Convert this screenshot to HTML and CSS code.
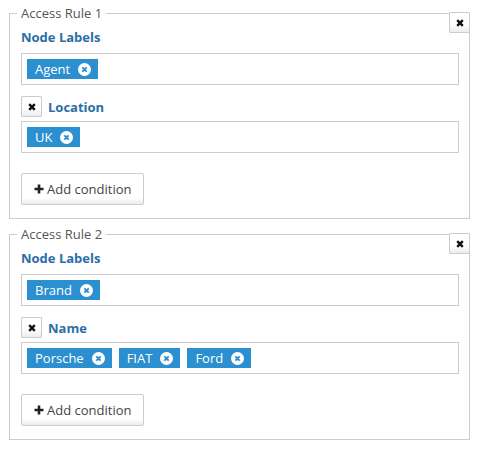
FILE: index.html
```html
<!DOCTYPE html>
<html>
<head>
<meta charset="utf-8">
<link rel="stylesheet" href="styles.css">
</head>
<body>
<div class="rules">
  <fieldset class="rule">
    <legend class="rule-title">Access Rule 1</legend>
    <button class="icon-btn rule-remove" type="button"><svg width="8" height="8" viewBox="0 0 8 8"><path d="M1.2 1.2L6.8 6.8M6.8 1.2L1.2 6.8" stroke="#111" stroke-width="2.4"/></svg></button>
    <div class="field-label">Node Labels</div>
    <div class="tag-box">
      <span class="tag">Agent<span class="tag-x"><svg width="13" height="13" viewBox="0 0 13 13"><circle cx="6.5" cy="6.5" r="6.5" fill="#fff"/><path d="M4.3 4.3L8.7 8.7M8.7 4.3L4.3 8.7" stroke="#2b8fd0" stroke-width="1.9"/></svg></span></span>
    </div>
    <div class="cond-head">
      <button class="icon-btn cond-remove" type="button"><svg width="8" height="8" viewBox="0 0 8 8"><path d="M1.2 1.2L6.8 6.8M6.8 1.2L1.2 6.8" stroke="#111" stroke-width="2.4"/></svg></button>
      <span class="field-label inline">Location</span>
    </div>
    <div class="tag-box">
      <span class="tag">UK<span class="tag-x"><svg width="13" height="13" viewBox="0 0 13 13"><circle cx="6.5" cy="6.5" r="6.5" fill="#fff"/><path d="M4.3 4.3L8.7 8.7M8.7 4.3L4.3 8.7" stroke="#2b8fd0" stroke-width="1.9"/></svg></span></span>
    </div>
    <button class="add-btn" type="button"><svg width="10" height="10" viewBox="0 0 10 10"><path d="M5 0.5V9.5M0.5 5H9.5" stroke="#222" stroke-width="2.6"/></svg>Add condition</button>
  </fieldset>

  <fieldset class="rule">
    <legend class="rule-title">Access Rule 2</legend>
    <button class="icon-btn rule-remove" type="button"><svg width="8" height="8" viewBox="0 0 8 8"><path d="M1.2 1.2L6.8 6.8M6.8 1.2L1.2 6.8" stroke="#111" stroke-width="2.4"/></svg></button>
    <div class="field-label">Node Labels</div>
    <div class="tag-box">
      <span class="tag">Brand<span class="tag-x"><svg width="13" height="13" viewBox="0 0 13 13"><circle cx="6.5" cy="6.5" r="6.5" fill="#fff"/><path d="M4.3 4.3L8.7 8.7M8.7 4.3L4.3 8.7" stroke="#2b8fd0" stroke-width="1.9"/></svg></span></span>
    </div>
    <div class="cond-head">
      <button class="icon-btn cond-remove" type="button"><svg width="8" height="8" viewBox="0 0 8 8"><path d="M1.2 1.2L6.8 6.8M6.8 1.2L1.2 6.8" stroke="#111" stroke-width="2.4"/></svg></button>
      <span class="field-label inline">Name</span>
    </div>
    <div class="tag-box">
      <span class="tag">Porsche<span class="tag-x"><svg width="13" height="13" viewBox="0 0 13 13"><circle cx="6.5" cy="6.5" r="6.5" fill="#fff"/><path d="M4.3 4.3L8.7 8.7M8.7 4.3L4.3 8.7" stroke="#2b8fd0" stroke-width="1.9"/></svg></span></span>
      <span class="tag">FIAT<span class="tag-x"><svg width="13" height="13" viewBox="0 0 13 13"><circle cx="6.5" cy="6.5" r="6.5" fill="#fff"/><path d="M4.3 4.3L8.7 8.7M8.7 4.3L4.3 8.7" stroke="#2b8fd0" stroke-width="1.9"/></svg></span></span>
      <span class="tag">Ford<span class="tag-x"><svg width="13" height="13" viewBox="0 0 13 13"><circle cx="6.5" cy="6.5" r="6.5" fill="#fff"/><path d="M4.3 4.3L8.7 8.7M8.7 4.3L4.3 8.7" stroke="#2b8fd0" stroke-width="1.9"/></svg></span></span>
    </div>
    <button class="add-btn" type="button"><svg width="10" height="10" viewBox="0 0 10 10"><path d="M5 0.5V9.5M0.5 5H9.5" stroke="#222" stroke-width="2.6"/></svg>Add condition</button>
  </fieldset>
</div>
</body>
</html>
```

FILE: styles.css
```css
html, body {
  margin: 0;
  padding: 0;
  background: #fff;
}
body {
  font-family: "Open Sans", "Liberation Sans", sans-serif;
  font-size: 13px;
  color: #333;
}
.rules {
  padding: 5px 8px 0 9px;
}
.rule {
  position: relative;
  margin: 0 0 7px 0;
  padding: 0 10px 13px 11px;
  border: 1px solid #ccc;
  min-width: 0;
}
.rule-title {
  margin-left: -4px;
  padding: 0 4px;
  font-size: 13px;
  line-height: 16px;
  color: #555;
}
.icon-btn {
  display: flex;
  align-items: center;
  justify-content: center;
  width: 21px;
  height: 21px;
  padding: 0;
  border: 1px solid #ccc;
  border-radius: 1px;
  background: linear-gradient(#fff 0%, #fff 60%, #ececec 100%);
  cursor: pointer;
}
.rule-remove {
  position: absolute;
  top: -9px;
  right: -1px;
}
.field-label {
  margin-top: 7px;
  font-weight: 700;
  line-height: 18px;
  color: #2a6ea6;
}
.field-label.inline {
  margin-top: 0;
  margin-left: 6px;
}
.tag-box {
  display: flex;
  flex-wrap: wrap;
  gap: 7px;
  margin-top: 7px;
  padding: 5px;
  min-height: 20px;
  border: 1px solid #ccc;
}
.tag {
  display: inline-flex;
  align-items: center;
  height: 20px;
  padding: 0 7px 0 8px;
  background: #2b8fd0;
  color: #fff;
  font-size: 13px;
  line-height: 20px;
}
.tag-x {
  display: inline-flex;
  margin-left: 8px;
}
.cond-head {
  display: flex;
  align-items: center;
  margin-top: 11px;
}
.cond-head + .tag-box {
  margin-top: 4px;
}
.add-btn {
  display: flex;
  align-items: center;
  gap: 3px;
  margin-top: 20px;
  height: 32px;
  padding: 0 12px 0 12px;
  border: 1px solid #ccc;
  border-radius: 2px;
  background: linear-gradient(#fff 0%, #fff 80%, #ececec 100%);
  font-family: "Open Sans", "Liberation Sans", sans-serif;
  font-size: 13px;
  color: #444;
  cursor: pointer;
}
```
